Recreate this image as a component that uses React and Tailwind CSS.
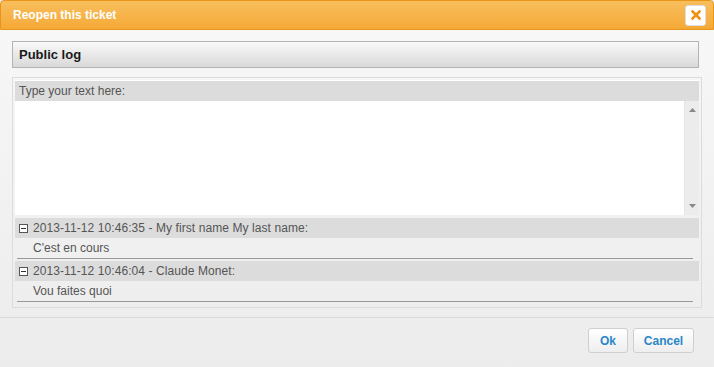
function LogEntry({ header, text }) {
  return (
    <div>
      <div className="h-[20px] bg-[#dcdcdc] flex items-center pl-[4px]">
        <span className="w-[9px] h-[9px] border border-[#555] bg-white flex items-center justify-center mr-[5px]">
          <span className="w-[5px] h-px bg-[#333]" />
        </span>
        <span className="text-[12px] text-[#555] tracking-[0.08px]">{header}</span>
      </div>
      <div className="h-[21px] flex items-center pl-[16px] text-[12px] text-[#555] border-b border-[#999] mr-[6px] ml-[2px]">
        {text}
      </div>
    </div>
  );
}

export default function App() {
  return (
    <div
      className="w-[714px] h-[367px] bg-[#ececec] flex flex-col"
      style={{ fontFamily: '"Liberation Sans", Arial, sans-serif' }}
    >
      <div className="h-[30px] rounded-t-[4px] border border-[#e8961a] bg-gradient-to-b from-[#f8be5c] to-[#f5a935] flex items-center justify-between pl-[12px] pr-[7px]">
        <span className="text-[12px] font-bold text-white">Reopen this ticket</span>
        <button className="w-[21px] h-[21px] rounded-[3px] bg-white border border-[#ddd] flex items-center justify-center">
          <svg width="10" height="10" viewBox="0 0 10 10">
            <path d="M1.5 1.5 L8.5 8.5 M8.5 1.5 L1.5 8.5" stroke="#f0900f" strokeWidth="2.6" strokeLinecap="square" />
          </svg>
        </button>
      </div>

      <div className="flex-1 bg-gradient-to-b from-[#f7f7f7] to-[#ececec] flex flex-col">
        <div className="px-[12px] pt-[11px]">
          <div className="h-[27px] mr-[3px] border border-[#b3b3b3] bg-gradient-to-b from-[#f9f9f9] to-[#d9d9d9] flex items-center pl-[6px]">
            <span className="text-[13px] font-bold text-[#1a1a1a]">Public log</span>
          </div>
        </div>

        <div className="mx-[12px] mt-[9px] border border-[#dcdcdc] p-[2px] pb-[5px]">
          <div className="border-t border-white">
            <div className="h-[20px] bg-[#dcdcdc] flex items-center pl-[4px] text-[12px] text-[#555]">
              Type your text here:
            </div>
            <div className="h-[114px] bg-white flex">
              <div className="flex-1" />
              <div className="w-[15px] bg-[#ececec] border-l border-[#e4e4e4] flex flex-col items-center justify-between py-[7px]">
                <svg width="7" height="4" viewBox="0 0 7 4">
                  <path d="M0 4 L3.5 0 L7 4 Z" fill="#888" />
                </svg>
                <svg width="7" height="4" viewBox="0 0 7 4">
                  <path d="M0 0 L3.5 4 L7 0 Z" fill="#888" />
                </svg>
              </div>
            </div>
            <div className="h-[3px]" />
            <LogEntry header="2013-11-12 10:46:35 - My first name My last name:" text="C'est en cours" />
            <div className="h-[2px]" />
            <LogEntry header="2013-11-12 10:46:04 - Claude Monet:" text="Vou faites quoi" />
          </div>
        </div>

        <div className="mt-[9px] border-t border-[#dadada]" />

        <div className="flex justify-end gap-[5px] pr-[20px] pt-[10px]">
          <button className="h-[25px] w-[40px] rounded-[3px] border border-[#cfcfcf] bg-gradient-to-b from-white to-[#eeeeee] text-[12px] font-bold text-[#2a87c7]">
            Ok
          </button>
          <button className="h-[25px] w-[61px] rounded-[3px] border border-[#cfcfcf] bg-gradient-to-b from-white to-[#eeeeee] text-[12px] font-bold text-[#2a87c7]">
            Cancel
          </button>
        </div>
      </div>
    </div>
  );
}
